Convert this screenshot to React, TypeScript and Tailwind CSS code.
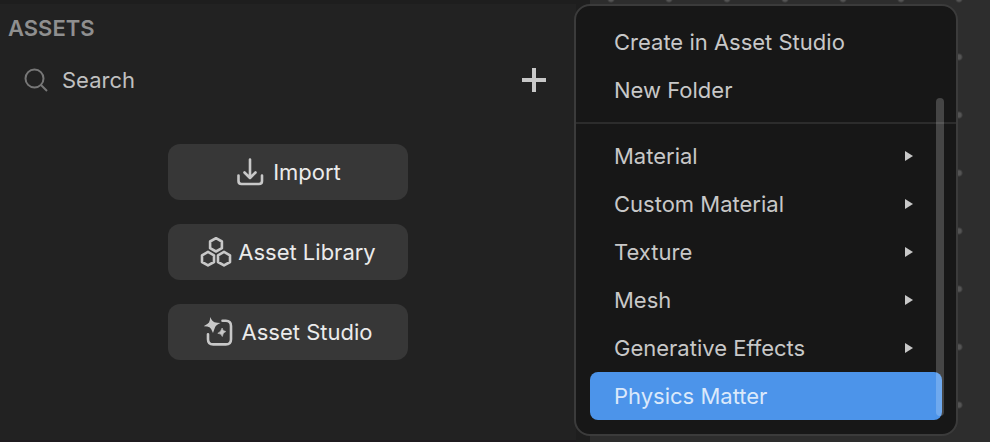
import type { ReactNode } from 'react';

interface MenuEntry {
  label: string;
  hasSubmenu?: boolean;
  active?: boolean;
}

const createEntries: MenuEntry[] = [
  { label: 'Create in Asset Studio' },
  { label: 'New Folder' },
];

const assetEntries: MenuEntry[] = [
  { label: 'Material', hasSubmenu: true },
  { label: 'Custom Material', hasSubmenu: true },
  { label: 'Texture', hasSubmenu: true },
  { label: 'Mesh', hasSubmenu: true },
  { label: 'Generative Effects', hasSubmenu: true },
  { label: 'Physics Matter', active: true },
];

function SearchIcon() {
  return (
    <svg className="h-6 w-6 text-[#777777]" viewBox="0 0 24 24" fill="none" stroke="currentColor" strokeWidth="2" aria-hidden="true">
      <circle cx="10.5" cy="10.5" r="9" />
      <path d="M17 17l6 6" />
    </svg>
  );
}

function ImportIcon() {
  return (
    <svg className="h-8 w-8 text-[#c8c8c8]" viewBox="0 0 32 32" fill="none" stroke="currentColor" strokeWidth="2.6" strokeLinecap="round" strokeLinejoin="round" aria-hidden="true">
      <path d="M15 3.5V22M9.500 16.500l5.500 5.500 5.500-5.500" />
      <path d="M3.500 19.500v5.500q0 3 3 3h17.500q3 0 3-3v-5.500" />
    </svg>
  );
}

function LibraryIcon() {
  return (
    <svg className="h-8 w-8 text-[#c8c8c8]" viewBox="0 0 32 32" fill="none" stroke="currentColor" strokeWidth="2.6" strokeLinejoin="round" aria-hidden="true">
      <path d="M16 2.2l5.900 3.300v6.700L16 15.500l-5.900-3.300V5.500z" />
      <path d="M8 15.900l6 3.400V26l-6 3.400L2 26v-6.700z" />
      <path d="M24 15.900l6 3.400V26l-6 3.400-6-3.400v-6.700z" />
    </svg>
  );
}

function StudioIcon() {
  return (
    <svg className="h-8 w-8 text-[#c8c8c8]" viewBox="0 0 32 32" fill="none" aria-hidden="true">
      <path
        d="M18.500 4.800h3.300q5.200 0 5.200 5.200v13.200q0 5.200-5.200 5.200H9.200Q4 28.400 4 23.200v-5"
        stroke="currentColor"
        strokeWidth="2.6"
        strokeLinecap="round"
      />
      <path
        d="M6.300 1Q8 5.500 10.500 6.200T16.500 7Q12 9.200 11.200 11T9 17Q7.500 12.500 5.500 11.300T-.5 10.200Q4 8 5 6.500T6.300 1z"
        fill="currentColor"
      />
      <path d="M18.100 12Q18.500 15 21.800 15.500Q18.800 16.500 18.300 20.500Q17.200 17.300 13.800 17.300Q17 16 18.100 12z" fill="currentColor" stroke="currentColor" strokeWidth=".6" />
    </svg>
  );
}

function AssetButton({ icon, children }: { icon: ReactNode; children: ReactNode }) {
  return (
    <button type="button" className="flex h-14 w-60 items-center justify-center gap-1.5 rounded-xl bg-[#373737] text-[#ebebeb]">
      {icon}
      {children}
    </button>
  );
}

function MenuItem({ entry }: { entry: MenuEntry }) {
  return (
    <button
      type="button"
      role="menuitem"
      className={
        entry.active
          ? 'flex h-12 items-center justify-between rounded-lg bg-[#4c94ea] px-6 text-left text-[#dbe9fb]'
          : 'flex h-12 items-center justify-between rounded-lg px-6 text-left text-[#c8c8c8]'
      }
    >
      {entry.label}
      {entry.hasSubmenu && (
        <svg className="mr-[5px] h-2.5 w-2" viewBox="0 0 8 10" fill="currentColor" aria-hidden="true">
          <path d="M0 0l8 5-8 5z" />
        </svg>
      )}
    </button>
  );
}

function CreateMenu() {
  return (
    <div role="menu" className="absolute top-1 right-8 w-96 rounded-2xl border-2 border-[#3b3b3b] bg-[#171717] pt-3 pb-3.5">
      <div className="flex flex-col px-3.5">
        {createEntries.map((entry) => (
          <MenuItem key={entry.label} entry={entry} />
        ))}
      </div>
      <hr className="my-2 border-t-2 border-[#2c2c2c]" />
      <div className="flex flex-col px-3.5">
        {assetEntries.map((entry) => (
          <MenuItem key={entry.label} entry={entry} />
        ))}
      </div>
      {/* Scrollbar thumb */}
      <div className="absolute top-23 right-3 bottom-4.5 w-2 rounded-full bg-white/20" />
    </div>
  );
}

export default function App() {
  return (
    <div className="relative flex min-h-screen bg-[#1e1e1e] font-['Inter',sans-serif] text-[22px] leading-7">
      <aside className="mt-1 flex-1 border-b-2 border-[#1f1b1f] bg-[#222222]">
        <h2 className="px-2 pt-2.5 font-semibold text-[#8f8f8f]">ASSETS</h2>
        <div className="mt-5 flex h-9 items-center pr-[30px] pl-6">
          <label htmlFor="asset-search" className="mr-3.5">
            <SearchIcon />
          </label>
          <input
            id="asset-search"
            type="text"
            aria-label="Search assets"
            placeholder="Search"
            className="min-w-0 flex-1 bg-transparent text-[#c8c8c8] outline-none placeholder:text-[#c0c0c0]"
          />
          <button type="button" aria-label="Add asset" className="text-[#c8c8c8]">
            <svg className="h-6 w-6" viewBox="0 0 24 24" stroke="currentColor" strokeWidth="4" aria-hidden="true">
              <path d="M12 0v24M0 12h24" />
            </svg>
          </button>
        </div>
        <div className="mt-11.5 flex flex-col items-center gap-6">
          <AssetButton icon={<ImportIcon />}>Import</AssetButton>
          <AssetButton icon={<LibraryIcon />}>Asset Library</AssetButton>
          <AssetButton icon={<StudioIcon />}>Asset Studio</AssetButton>
        </div>
      </aside>

      {/* Dotted canvas behind the menu */}
      <main className="ml-3.5 w-100 bg-[#2d2d2d] bg-[radial-gradient(circle,#545454_2px,transparent_4px)] bg-[length:58px_58px] bg-[position:-8px_-30px]" />

      <CreateMenu />
    </div>
  );
}
